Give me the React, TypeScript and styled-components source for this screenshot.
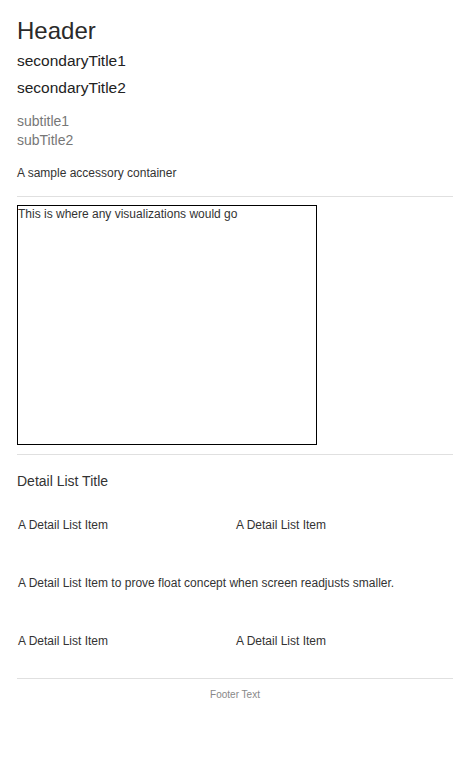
import React from "react";
import styled, { createGlobalStyle } from "styled-components";

const GlobalStyle = createGlobalStyle`
  body {
    margin: 0;
    background: #ffffff;
    font-family: "Liberation Sans", Arial, sans-serif;
  }
`;

const Page = styled.div`
  padding: 17px 17px 40px;
  display: flex;
  flex-direction: column;
`;

const Header = styled.h1`
  margin: 0;
  font-size: 24px;
  line-height: 28px;
  font-weight: 400;
  color: #2a2a2a;
`;

const SecondaryTitle = styled.h2<{ $top: number }>`
  margin: ${(p) => p.$top}px 0 0;
  font-size: 15.5px;
  line-height: 20px;
  font-weight: 400;
  color: #222;
`;

const Subtitles = styled.div`
  margin-top: 14px;
  display: flex;
  flex-direction: column;
`;

const Subtitle = styled.div`
  font-size: 14px;
  line-height: 19px;
  color: #777;
`;

const Accessory = styled.div`
  margin-top: 15px;
  font-size: 12px;
  line-height: 16px;
  color: #333;
`;

const Divider = styled.hr<{ $top: number }>`
  margin: ${(p) => p.$top}px 0 0;
  border: none;
  border-top: 1px solid #e0e0e0;
  height: 0;
`;

const VizBox = styled.div`
  margin-top: 8px;
  box-sizing: border-box;
  width: 300px;
  height: 240px;
  border: 1px solid #000;
  font-size: 12px;
  line-height: 16px;
  color: #333;
`;

const ListTitle = styled.div`
  margin-top: 17px;
  font-size: 14px;
  line-height: 18px;
  color: #333;
`;

const DetailList = styled.div`
  margin-top: 6px;
  display: grid;
  grid-template-columns: 1fr 1fr;
`;

const DetailItem = styled.div<{ $wide?: boolean }>`
  grid-column: ${(p) => (p.$wide ? "1 / -1" : "auto")};
  padding: 21px 1px;
  font-size: 12px;
  line-height: 16px;
  color: #333;
`;

const Footer = styled.div`
  margin-top: 10px;
  text-align: center;
  font-size: 10px;
  line-height: 12px;
  color: #888;
`;

export default function App() {
  return (
    <>
      <GlobalStyle />
      <Page>
        <Header>Header</Header>
        <SecondaryTitle $top={6}>secondaryTitle1</SecondaryTitle>
        <SecondaryTitle $top={7}>secondaryTitle2</SecondaryTitle>
        <Subtitles>
          <Subtitle>subtitle1</Subtitle>
          <Subtitle>subTitle2</Subtitle>
        </Subtitles>
        <Accessory>A sample accessory container</Accessory>
        <Divider $top={15} />
        <VizBox>This is where any visualizations would go</VizBox>
        <Divider $top={9} />
        <ListTitle>Detail List Title</ListTitle>
        <DetailList>
          <DetailItem>A Detail List Item</DetailItem>
          <DetailItem>A Detail List Item</DetailItem>
          <DetailItem $wide>
            A Detail List Item to prove float concept when screen readjusts smaller.
          </DetailItem>
          <DetailItem>A Detail List Item</DetailItem>
          <DetailItem>A Detail List Item</DetailItem>
        </DetailList>
        <Divider $top={8} />
        <Footer>Footer Text</Footer>
      </Page>
    </>
  );
}
